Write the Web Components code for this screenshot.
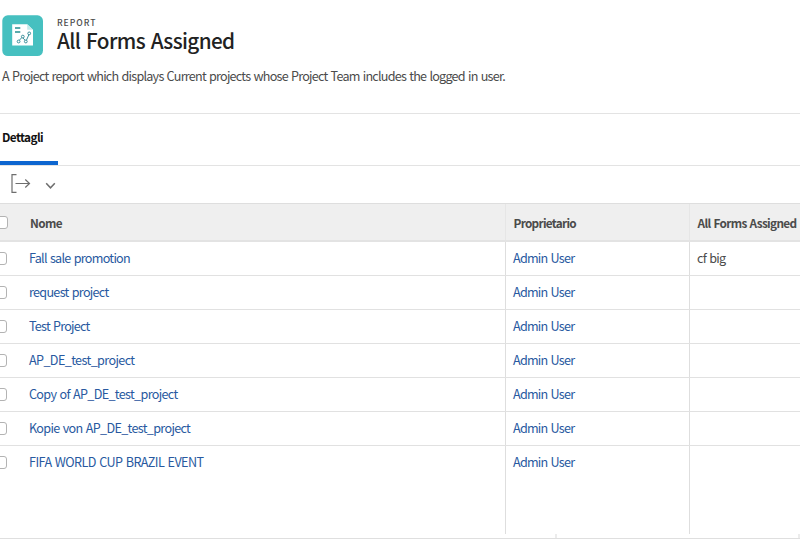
<!DOCTYPE html>
<html lang="it"><head><meta charset="utf-8"><title>All Forms Assigned</title>
<style>
html,body{margin:0;height:100%;overflow:hidden;background:#fff}
body{font-family:"Noto Sans CJK SC","Noto Sans",sans-serif;font-size:12.6px;color:#4b4b4b}
</style></head><body>
<report-page></report-page>
<script>
const define=(name,html,extra)=>customElements.define(name,class extends HTMLElement{
  connectedCallback(){
    if(!this.shadowRoot)this.attachShadow({mode:'open'}).innerHTML=html;
    if(extra)extra(this);
  }
});
/* Text run whose tracking is adjusted to a given width */
define('fit-text','<style>:host{display:inline-block;white-space:nowrap;line-height:20px;word-spacing:.08em}:host([small]){line-height:12px}</style><slot></slot>',el=>{
  const w=+el.getAttribute('width'),n=el.textContent.length;
  el.style.letterSpacing='0px';
  const have=el.getBoundingClientRect().width;
  el.style.letterSpacing=((w-have)/n).toFixed(4)+'px';
});
define('report-icon',`<style>:host{display:block;width:41px;height:41px}svg{display:block}</style>
<svg width="41" height="41" viewBox="0 0 41 41"><rect x=".3" y=".3" width="40.7" height="40.7" rx="5.5" fill="#46c0c0"/>
<path d="M10.2 9.2H25.2L31 14.8V30.6H10.2Z" fill="#fff"/><path d="M25.2 9.2V14.8H31Z" fill="#c5eaea"/>
<path d="M13 13H18.3M13 16.9H18.3" stroke="#248f91" stroke-width="1.5"/>
<g fill="#fff" stroke="#398f9a" stroke-width="1"><path d="M16.4 26.2L20.2 22.2L24 26.2L27.4 18.6" fill="none"/><circle cx="16.6" cy="26.5" r="1.4"/><circle cx="20.8" cy="21.6" r="1.4"/><circle cx="23.8" cy="26.5" r="1.4"/><circle cx="27.2" cy="18.4" r="1.4"/></g></svg>`);
define('check-box','<style>:host{display:block;box-sizing:border-box;width:14px;height:13px;border:1px solid #b3b3b3;border-radius:3px;background:#fff}</style>');
define('report-header',`<style>
:host{display:block;box-sizing:border-box;height:114px;padding:15px 0 0 2px;border-bottom:1px solid #e3e3e3}
.top{display:flex;gap:14px}.eyebrow{display:block;font-size:8.6px;font-weight:500;color:#4b4b4b;height:12px;line-height:12px;margin-top:1px}
h1{margin:0;font-size:20.7px;font-weight:500;color:#222;height:24px;line-height:20px;padding-top:2px}
p{margin:10px 0 0}</style>
<div class="top"><report-icon></report-icon><div><span class="eyebrow"><fit-text small width="39.5">REPORT</fit-text></span><h1><fit-text width="177.5">All Forms Assigned</fit-text></h1></div></div>
<p><fit-text width="503">A Project report which displays Current projects whose Project Team includes the logged in user.</fit-text></p>`);
define('report-tabs',`<style>:host{display:block;box-sizing:border-box;height:52px;border-bottom:1px solid #e3e3e3}
.tab{box-sizing:border-box;width:58px;height:51px;border-bottom:4px solid #0d66d0;padding:13px 0 0 2px;color:#111;font-weight:700;font-size:11.8px}</style>
<div class="tab"><fit-text width="41">Dettagli</fit-text></div>`);
define('report-toolbar',`<style>:host{display:flex;align-items:center;height:37px;padding-left:11px;gap:14px}svg{display:block;fill:none;stroke:#6e6e6e;stroke-width:1.2}</style>
<svg width="20" height="20" viewBox="0 0 20 20" style="margin-top:-2px"><path d="M5.5 .7H1V18.3H5.5M4.5 9.5H18.5M14.3 5.5L18.5 9.5L14.3 13.5"/></svg>
<svg width="12" height="10" viewBox="0 0 12 10" style="margin-top:2px;stroke-width:1.5"><path d="M1.2 2.2L5.5 6.8L9.8 2.2"/></svg>`);
define('table-row',`<style>
:host{display:grid;grid-template-columns:505px 184px 1fr;box-sizing:border-box;height:34px;border-bottom:1px solid #e1e1e1;color:#2859a0}
.c{display:flex;align-items:center;box-sizing:border-box;padding:0 0 1px 7px}
.c+.c{border-left:1px solid #dedede}.c.first{padding-left:0;gap:22px}check-box{margin-left:-7px}
.last{color:#4b4b4b}
:host([head]){height:39px;background:#efefef;border-top:1px solid #dedede;border-bottom:2px solid #e3e3e3;color:#4b4b4b;font-weight:700;font-size:11.8px}
:host([head]) .c{padding-bottom:0;padding-top:1px}:host([head]) .c+.c{border-color:#e6e6e6;padding-left:7.5px}:host([head]) check-box{margin-left:-6px;margin-top:-1px}
:host([tail]){height:88px;border-bottom:0}:host([tail]) .c{align-items:flex-start;padding-top:6px}:host([tail]) check-box{margin-top:4px}
</style><div class="c first"><check-box></check-box><slot name="name"></slot></div><div class="c"><slot name="owner"></slot></div><div class="c last"><slot name="forms"></slot></div>`);
const rows=[['Fall sale promotion',101,'cf big'],['request project',79.5],['Test Project',60.5],['AP_DE_test_project',105.5],['Copy of AP_DE_test_project',148.5],['Kopie von AP_DE_test_project',161.2],['FIFA WORLD CUP BRAZIL EVENT',174.5]];
define('report-table',`<style>:host{display:block}.foot{display:flex;justify-content:space-between;box-sizing:border-box;height:5px;padding-left:555px;border-bottom:1px solid #dfdfdf}.foot i{width:2px;background:#ececec}</style>
<table-row head><fit-text slot="name" width="32">Nome</fit-text><fit-text slot="owner" width="62.5">Proprietario</fit-text><fit-text slot="forms" width="99">All Forms Assigned</fit-text></table-row>
${rows.map((r,i)=>`<table-row${i===6?' tail':''}><fit-text slot="name" width="${r[1]}">${r[0]}</fit-text><fit-text slot="owner" width="61.3">Admin User</fit-text>${r[2]?`<fit-text slot="forms" width="28.5">${r[2]}</fit-text>`:''}</table-row>`).join('')}
<div class="foot"><i></i><i></i></div>`);
define('report-page',`<style>:host{display:block;width:800px;height:539px;overflow:hidden}</style><report-header></report-header><report-tabs></report-tabs><report-toolbar></report-toolbar><report-table></report-table>`);
</script></body></html>
